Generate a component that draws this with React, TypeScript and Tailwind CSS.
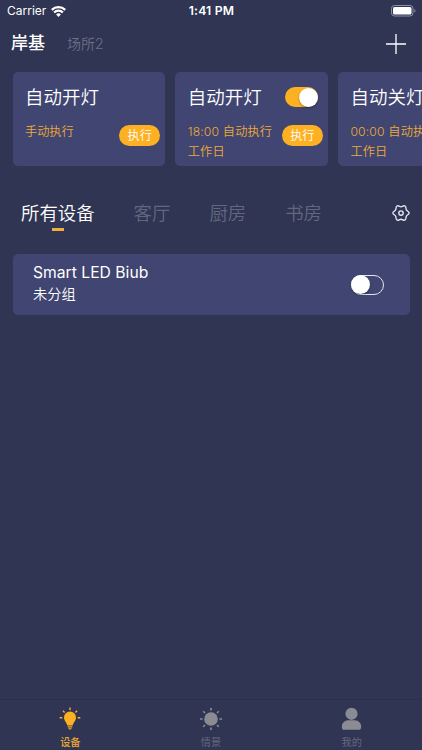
import React, { useState } from 'react';
import clsx from 'clsx';

const scenes = [
  { id: 1, title: '自动开灯', lines: ['手动执行'], timed: false },
  { id: 2, title: '自动开灯', lines: ['18:00 自动执行', '工作日'], timed: true },
  { id: 3, title: '自动关灯', lines: ['00:00 自动执行', '工作日'], timed: true },
];

const rooms = ['所有设备', '客厅', '厨房', '书房'];

const StatusBar = () => (
  <div className="h-[22px] grid grid-cols-3 items-center pl-[7px] pr-[6px] text-white">
    <div className="flex items-center gap-[5px]">
      <span className="text-[12px] leading-[22px]">Carrier</span>
      <svg width="15" height="11" viewBox="0 0 15 11" fill="none" stroke="currentColor" strokeWidth="2.2">
        <path d="M.8 3.9a9.5 9.5 0 0 1 13.4 0" />
        <path d="M3.1 6.5a6.2 6.2 0 0 1 8.8 0" />
        <path d="M7.5 11 5.1 8.5a3.4 3.4 0 0 1 4.8 0Z" fill="currentColor" stroke="none" />
      </svg>
    </div>
    <span className="text-center text-[12.2px] font-semibold tracking-[0.2px]">1:41 PM</span>
    <svg className="justify-self-end" width="25" height="12" viewBox="0 0 25 12">
      <rect x=".5" y=".5" width="21.5" height="10.5" rx="3" fill="none" stroke="#8d91a8" />
      <rect x="2" y="2" width="18.5" height="7.5" rx="1.5" fill="#fff" />
      <path d="M23.3 4v3.6c1.6-.6 1.6-3 0-3.6Z" fill="#8d91a8" />
    </svg>
  </div>
);

const Toggle = ({ on, onClick }: { on: boolean; onClick: () => void }) => (
  <button
    onClick={onClick}
    className={clsx(
      'flex h-[20px] w-[33px] shrink-0 items-center rounded-full',
      on ? 'justify-end bg-[#fdb022]' : 'justify-start border-[1.5px] border-[#e4e5f0]'
    )}
  >
    <span
      className={clsx(
        'h-[19px] w-[19px] shrink-0 rounded-full bg-white shadow-[0_1px_2px_rgba(0,0,0,0.35)]',
        !on && '-ml-px'
      )}
    />
  </button>
);

const GearIcon = () => (
  <svg width="18" height="18" viewBox="0 0 18 18" fill="none" stroke="#e8e9f2" strokeWidth="1.35" strokeLinejoin="round">
    <path d="M9 2.8C10.7 2.8 11.6 1.15 13.05 2 14.5 2.85 13.55 4.4 14.4 5.9 15.25 7.4 17.1 7.3 17.1 9 17.1 10.7 15.25 10.6 14.4 12.1 13.55 13.6 14.5 15.15 13.05 16 11.6 16.85 10.7 15.2 9 15.2 7.3 15.2 6.4 16.85 4.95 16 3.5 15.15 4.45 13.6 3.6 12.1 2.75 10.6.9 10.7.9 9 .9 7.3 2.75 7.4 3.6 5.9 4.45 4.4 3.5 2.85 4.95 2 6.4 1.15 7.3 2.8 9 2.8Z" />
    <circle cx="9" cy="9" r="2.2" />
  </svg>
);

const BulbIcon = () => (
  <svg width="22" height="24" viewBox="0 0 22 24" fill="#fdb022">
    <path d="M11 4.4a6 6 0 0 0-6 6c0 3.4 2.7 4.7 3.3 8.1h5.4c.6-3.4 3.3-4.7 3.3-8.1a6 6 0 0 0-6-6Z" />
    <path d="M8.7 19.3h4.6v1.3H8.7zM9.2 21.2h3.6c-.4 1.7-3.2 1.7-3.6 0Z" />
    <path
      d="M11 .6v2.5M3.9 3.8l1.7 1.7M18.1 3.8l-1.7 1.7M.7 10.7h2.6M18.7 10.7h2.6"
      stroke="#fdb022"
      strokeWidth="1.4"
    />
  </svg>
);

const SunIcon = () => (
  <svg width="24" height="24" viewBox="0 0 24 24">
    <circle cx="12" cy="12" r="6.8" fill="#8b8c93" />
    <path
      d="M12 1v2.6M12 20.4V23M1 12h2.6M20.4 12H23M4.2 4.2 6 6M18 18l1.8 1.8M4.2 19.8 6 18M18 6l1.8-1.8"
      stroke="#8b8c93"
      strokeWidth="1.6"
    />
  </svg>
);

const UserIcon = () => (
  <svg width="22" height="24" viewBox="0 0 22 24" fill="#8b8c93">
    <circle cx="10.5" cy="6.8" r="6.1" />
    <path d="M7 13.2h7c3.5 0 6.2 3 6.2 6.7 0 1.9-1 2.9-2.7 2.9h-14C1.8 22.8.8 21.8.8 19.9c0-3.7 2.7-6.7 6.2-6.7Z" />
  </svg>
);

const tabs = [
  { label: '设备', Icon: BulbIcon },
  { label: '情景', Icon: SunIcon },
  { label: '我的', Icon: UserIcon },
];

const App = () => {
  const [room, setRoom] = useState(0);
  const [timerOn, setTimerOn] = useState(true);
  const [deviceOn, setDeviceOn] = useState(false);

  return (
    <div className="flex h-[750px] w-full flex-col overflow-hidden bg-[#2f3552] font-['Inter','Noto_Sans_CJK_SC',sans-serif]">
      <StatusBar />

      {/* Places */}
      <header className="flex h-[43px] items-center pl-[11px] pr-[16px]">
        <span className="text-[17px] font-medium text-white">岸基</span>
        <span className="ml-[22px] text-[14px] font-[350] text-[#6c7088]">场所2</span>
        <svg className="ml-auto" width="20" height="20" viewBox="0 0 20 20" stroke="#fff" strokeWidth="1.3">
          <path d="M10 0v20M0 10h20" />
        </svg>
      </header>

      {/* Scenes */}
      <div className="mt-[7px] flex gap-[10px] overflow-hidden pl-[12.5px]">
        {scenes.map((scene) => (
          <div
            key={scene.id}
            className="flex h-[94px] w-[152.7px] shrink-0 flex-col rounded-[5px] bg-[#404571] pl-[12.5px] pr-[5px] pt-[12px]"
          >
            <div className="flex h-[26px] items-center justify-between pr-[5px]">
              <span className="whitespace-nowrap pt-[2px] text-[18.5px] font-[350] text-white">{scene.title}</span>
              {scene.timed && <Toggle on={timerOn} onClick={() => setTimerOn(!timerOn)} />}
            </div>
            <div className="mt-[11px] flex items-start justify-between">
              <div
                className={clsx(
                  'whitespace-nowrap pt-px text-[12.2px] font-[350] leading-[20.4px] text-[#eca936]',
                  scene.timed && 'tracking-[0.16px]'
                )}
              >
                {scene.lines.map((line) => (
                  <p key={line}>{line}</p>
                ))}
              </div>
              <button className="mt-[4px] h-[21px] w-[41px] shrink-0 rounded-full bg-[#fdb022] text-[12.2px] font-[350] leading-[22px] text-white">
                执行
              </button>
            </div>
          </div>
        ))}
      </div>

      {/* Rooms */}
      <div className="mt-[34px] flex h-[31px] items-start gap-[39px] pl-[21px] pr-[12.5px]">
        {rooms.map((name, i) => (
          <button key={name} onClick={() => setRoom(i)} className="flex flex-col items-center">
            <span
              className={clsx(
                'text-[18.4px] font-[350] leading-[27px]',
                i === room ? 'text-white' : 'text-[#62667f]'
              )}
            >
              {name}
            </span>
            {i === room && <span className="mt-px h-[3px] w-[12px] bg-[#edb03a]" />}
          </button>
        ))}
        <button className="ml-auto mt-[4px]">
          <GearIcon />
        </button>
      </div>

      {/* Devices */}
      <div className="mx-[12.5px] mt-[23px] flex h-[61px] items-center justify-between rounded-[5px] bg-[#404571] pl-[20.5px] pr-[25.5px]">
        <div className="pb-[3px] text-white">
          <p className="text-[15.7px] leading-[22px]">Smart LED Biub</p>
          <p className="text-[14.2px] font-[350] leading-[20px]">未分组</p>
        </div>
        <Toggle on={deviceOn} onClick={() => setDeviceOn(!deviceOn)} />
      </div>

      <nav className="mt-auto grid h-[51px] grid-cols-3 border-t border-[#293150]">
        {tabs.map(({ label, Icon }, i) => (
          <div key={label} className="flex flex-col items-center pt-[7px]">
            <Icon />
            <span
              className={clsx(
                'mt-[4px] text-[10.2px] leading-[14px]',
                i === 0 ? 'font-medium text-[#eca936]' : 'text-[#656880]'
              )}
            >
              {label}
            </span>
          </div>
        ))}
      </nav>
    </div>
  );
};

export default App;
